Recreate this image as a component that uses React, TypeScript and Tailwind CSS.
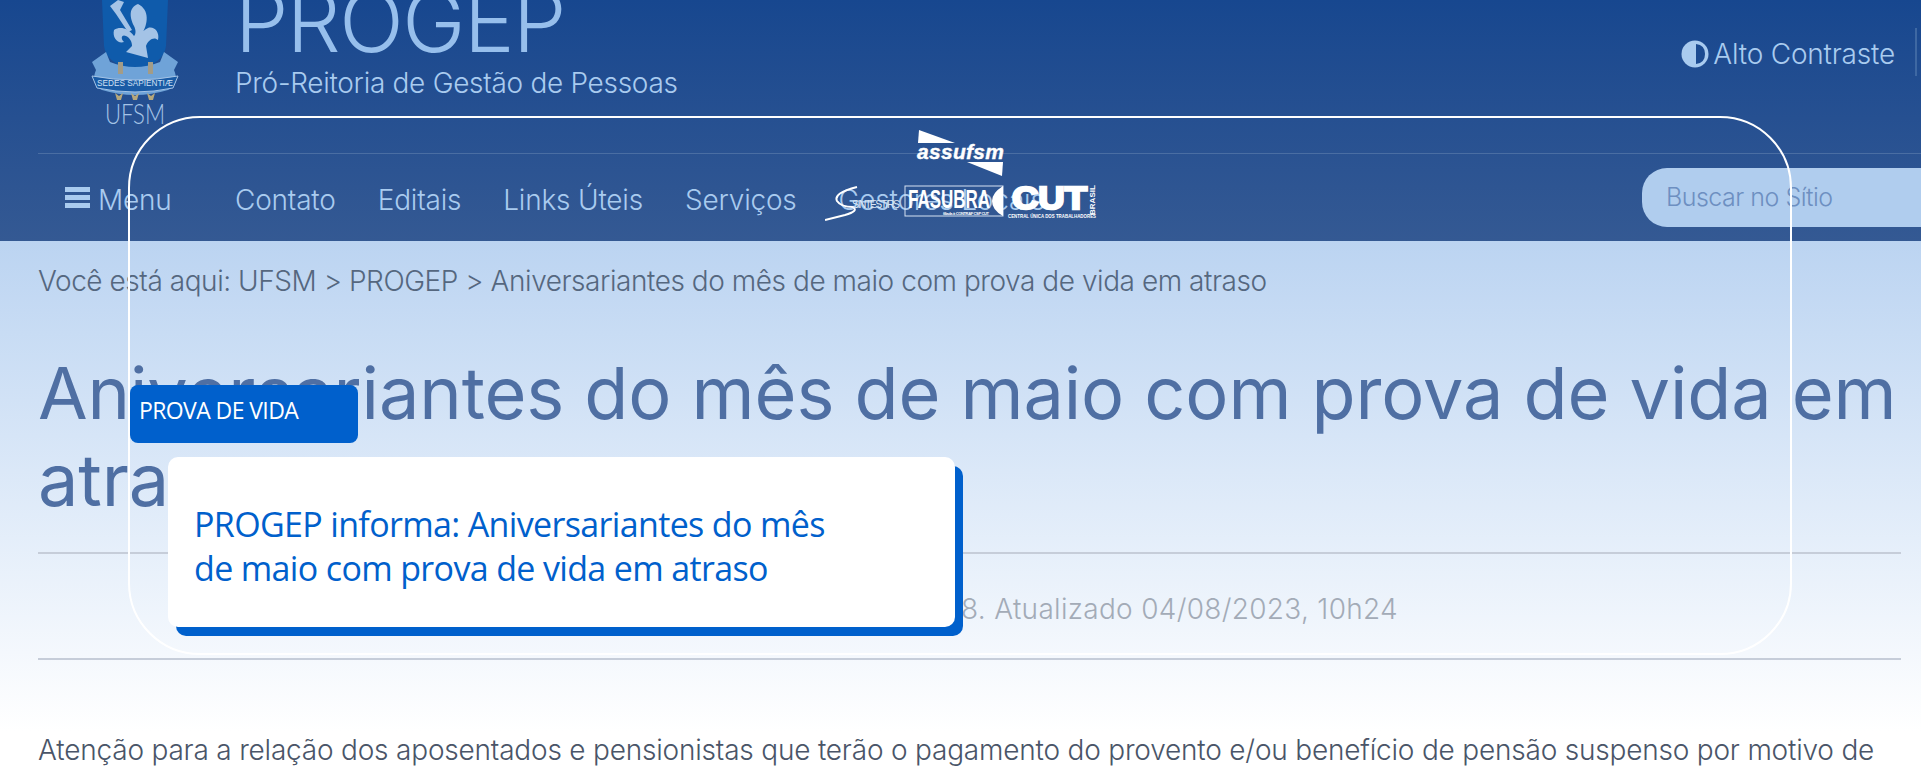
const sans = "font-['Inter','Liberation_Sans',sans-serif]"

const navItems = ['Contato', 'Editais', 'Links Úteis', 'Serviços', 'Gestores Locais']

function Crest() {
  return (
    <svg viewBox="0 0 94 124" className="w-[94px] h-[124px]" aria-hidden="true">
      <path d="M14 0 L80 0 L78 46 Q76 64 47 70 Q18 64 16 46 Z" fill="#0f5bab" />
      <path d="M50 4 C40 8 42 18 46 26 C48 30 48 34 46 36 C40 28 32 26 26 30 C24 38 30 44 36 42 C32 38 34 34 38 36 C42 38 44 42 44 46 L38 52 L60 58 L58 46 C60 40 66 36 70 40 C72 32 66 26 60 28 C56 30 54 32 54 34 C60 24 62 10 50 4 Z" fill="#a4c3e6" />
      <path d="M22 6 L30 0 L36 2 L32 10 L44 30 L40 32 L28 14 Z" fill="#a4c3e6" />
      <path d="M4 62 L18 52 L22 62 Q47 72 72 62 L76 52 L90 62 L86 70 Q92 84 80 90 Q47 100 14 90 Q2 84 8 70 Z" fill="#6fa3d8" />
      <path d="M4 76 Q47 84 90 76 L85 88 Q47 96 9 88 Z" fill="#1a5ba5" stroke="#a4c3e6" strokeWidth="1" />
      <rect x="30" y="62" width="5" height="12" fill="#a39c87" />
      <rect x="60" y="62" width="5" height="12" fill="#a39c87" />
      <path d="M27 93 l4 3 l4 -3 l-2 7 h-4 Z M43 93 l4 3 l4 -3 l-2 7 h-4 Z M59 93 l4 3 l4 -3 l-2 7 h-4 Z" fill="#b5a77c" />
      <text x="47" y="86" textAnchor="middle" fontSize="9" fill="#cfe0f4" fontFamily="Liberation Sans" textLength="76" lengthAdjust="spacingAndGlyphs">SEDES SAPIENTIÆ</text>
      <text x="47" y="124" textAnchor="middle" fontSize="28" fill="#a4c3e6" fontFamily="Lato" fontWeight="300" textLength="60" lengthAdjust="spacingAndGlyphs">UFSM</text>
    </svg>
  )
}

function Contrast() {
  return (
    <svg viewBox="0 0 28 28" className="w-[28px] h-[28px]" aria-hidden="true">
      <circle cx="14" cy="14" r="13.5" fill="#a9cbef" />
      <path d="M15 4 Q24 5 24 14 Q24 23 15 24 Z" fill="#1c4b91" />
    </svg>
  )
}

function PartnerLogos() {
  return (
    <div className="absolute left-[825px] top-[127px] w-[275px] h-[96px]">
      <svg viewBox="0 0 275 96" className="w-[275px] h-[96px]" aria-hidden="true">
        <path d="M94 3 L93 16 L130 16 Z" fill="#fff" />
        <path d="M142 35 L178 35 L177 49 Z" fill="#fff" />
        <text x="92" y="32" fontFamily="Liberation Sans" fontWeight="700" fontStyle="italic" fontSize="21" fill="#fff" stroke="#fff" strokeWidth="0.4" textLength="87">assufsm</text>
        <path d="M32 60 Q8 66 12 74 Q16 80 28 80 Q34 84 20 88 L0 93" fill="none" stroke="#fff" strokeWidth="2" />
        <text x="27" y="81" fontFamily="Liberation Sans" fontSize="10.5" fill="#dbe7f5" textLength="48">SINTEST/RS</text>
        <rect x="80" y="59" width="98" height="30" fill="none" stroke="#d5e2f2" strokeWidth="1" />
        <text x="83" y="81" fontFamily="Liberation Sans" fontWeight="700" fontSize="26" fill="#fff" textLength="82" lengthAdjust="spacingAndGlyphs">FASUBRA</text>
        <text x="118" y="88" fontFamily="Liberation Sans" fontWeight="700" fontSize="4" fill="#fff" textLength="46">filiada à CONTRAF CSP CUT</text>
        <path d="M178 59 Q167 66 167 74 Q167 83 178 89 Z" fill="#fff" />
        <text x="187" y="82" fontFamily="Liberation Sans" fontWeight="700" fontSize="32" fill="#fff" stroke="#fff" strokeWidth="2.4" textLength="75" lengthAdjust="spacingAndGlyphs">CUT</text>
        <text x="183" y="91" fontFamily="Liberation Sans" fontWeight="700" fontSize="5" fill="#fff" textLength="88" lengthAdjust="spacingAndGlyphs">CENTRAL ÚNICA DOS TRABALHADORES</text>
        <text transform="translate(270,88) rotate(-90)" fontFamily="Liberation Sans" fontWeight="700" fontSize="8" fill="#fff" textLength="30">BRASIL</text>
      </svg>
    </div>
  )
}

export default function App() {
  return (
    <div className={`relative w-full h-[770px] overflow-hidden bg-gradient-to-b from-[#bad3f1] from-[30%] to-white to-[95%] ${sans}`}>
      <header className="h-[241px] bg-gradient-to-b from-[#17478f] to-[#345993] text-[#a9cbef] font-light">
        <div className="relative flex h-[154px] ml-[38px] border-b border-[#4a6ea3]">
          <div className="ml-[50px]">
            <Crest />
          </div>
          <div className="ml-[53px] -mt-[24px]">
            <h2 className="text-[85px] leading-[92px] tracking-[-1.5px] text-[#97bfec]">PROGEP</h2>
            <p className="text-[28px] leading-[32px] -mt-[1px] tracking-[-0.3px]">Pró-Reitoria de Gestão de Pessoas</p>
          </div>
          <div className="ml-auto mt-[40px] mr-[26px] flex items-center gap-[4px] h-[28px] text-[28px] tracking-[-0.2px]">
            <Contrast />
            <span>Alto Contraste</span>
          </div>
          <div className="absolute right-[4px] top-[28px] h-[48px] w-[2px] bg-[#3e68a3]" />
        </div>
        <nav className="flex items-center h-[87px] text-[28px] tracking-[-0.2px]">
          <div className="flex items-center gap-[8px] ml-[65px] w-[170px]">
            <span className="flex flex-col gap-[3px] w-[25px]">
              <i className="block h-[5px] bg-[#a9cbef]" />
              <i className="block h-[5px] bg-[#a9cbef]" />
              <i className="block h-[5px] bg-[#a9cbef]" />
            </span>
            <span className="pt-[5px]">Menu</span>
          </div>
          <ul className="flex gap-[42px] pt-[5px]">
            {navItems.map((item) => (
              <li key={item}>{item}</li>
            ))}
          </ul>
          <div className="ml-auto flex items-center w-[279px] h-[59px] pl-[24px] rounded-l-[25px] bg-[#b0cdee] text-[#6d8fc1] text-[25px] tracking-[-0.5px]">
            Buscar no Sítio
          </div>
        </nav>
      </header>

      <main className="px-[38px]">
        <p className="mt-[22px] text-[28px] leading-[36px] font-light text-[#55677f] tracking-[-0.45px]">
          Você está aqui: UFSM &gt; PROGEP &gt; Aniversariantes do mês de maio com prova de vida em atraso
        </p>
        <h1 className="mt-[50px] -mr-[30px] text-[72px] leading-[87px] tracking-[-0.1px] text-[#4f6fa3]">
          Aniversariantes do mês de maio com prova de vida em atraso
        </h1>
        <div className="mt-[29px] w-[1863px] border-t-2 border-[#c6cdd9]" />
        <p className="mt-[38px] w-[1360px] text-right text-[28px] leading-[34px] font-light text-[#a3abb7] tracking-[0.3px]">
          Publicado 04/08/2023, 10h18. Atualizado 04/08/2023, 10h24
        </p>
        <div className="mt-[32px] w-[1863px] border-t-2 border-[#c6cdd9]" />
        <p className="mt-[72px] text-[28px] leading-[36px] font-light text-[#4a5568] whitespace-nowrap tracking-[-0.2px]">
          Atenção para a relação dos aposentados e pensionistas que terão o pagamento do provento e/ou benefício de pensão suspenso por motivo de
        </p>
      </main>

      <PartnerLogos />

      <div className="absolute left-[128px] top-[116px] w-[1664px] h-[539px] rounded-[72px] border-2 border-white" />

      <div className="absolute left-[130px] top-[385px] w-[228px] h-[58px] pl-[9px] pt-[8px] rounded-[8px] bg-[#0060cc] text-white text-[23px] leading-[34px] tracking-[-0.6px] font-['Open_Sans',sans-serif]">
        PROVA DE VIDA
      </div>

      <div className="absolute left-[168px] top-[457px] w-[787px] h-[170px] pl-[26px] pt-[45px] rounded-[10px] bg-white shadow-[8px_9px_0_0_#0060cc] text-[#0060cc] text-[34px] leading-[44px] tracking-[-0.65px] font-['Open_Sans',sans-serif]">
        PROGEP informa: Aniversariantes do mês
        <br />
        de maio com prova de vida em atraso
      </div>
    </div>
  )
}
